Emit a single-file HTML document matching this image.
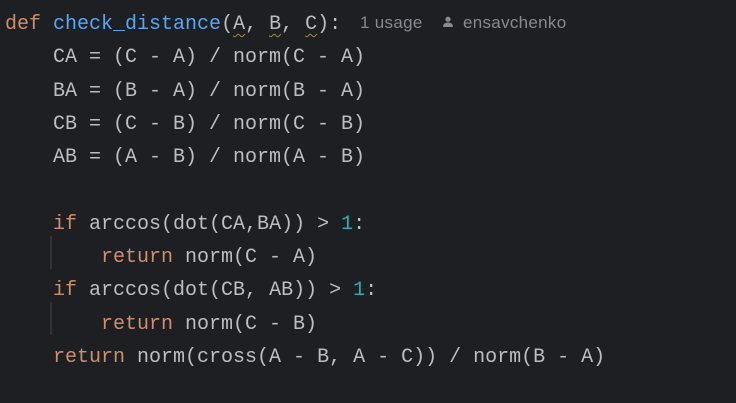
<!DOCTYPE html>
<html><head><meta charset="utf-8"><style>
html,body{margin:0;padding:0;background:#1e1f22;width:736px;height:403px;overflow:hidden}
.code{position:absolute;left:5px;top:8px;font-family:"Liberation Mono",monospace;font-size:20px;line-height:33.3px;color:#bcbec4;white-space:pre}
.k{color:#cf8e6d}.f{color:#56a8f5}.n{color:#2aacb8}
.u{text-decoration:underline wavy #a08a3c;text-decoration-thickness:1px;text-underline-offset:4px}
.hint{position:absolute;top:13px;font-family:"Liberation Sans",sans-serif;font-size:17px;color:#868a91;white-space:nowrap;letter-spacing:0.3px}
.g{position:absolute;left:50px;width:2px;background:#313338}
</style></head><body>
<div class="g" style="top:236px;height:33px"></div>
<div class="g" style="top:302px;height:33px"></div>
<div class="code"><span class="k">def</span> <span class="f">check_distance</span>(<span class="u">A</span>, <span class="u">B</span>, <span class="u">C</span>):
    CA = (C - A) / norm(C - A)
    BA = (B - A) / norm(B - A)
    CB = (C - B) / norm(C - B)
    AB = (A - B) / norm(A - B)

    <span class="k">if</span> arccos(dot(CA,BA)) &gt; <span class="n">1</span>:
        <span class="k">return</span> norm(C - A)
    <span class="k">if</span> arccos(dot(CB, AB)) &gt; <span class="n">1</span>:
        <span class="k">return</span> norm(C - B)
    <span class="k">return</span> norm(cross(A - B, A - C)) / norm(B - A)</div>
<div class="hint" style="left:360px">1 usage</div>
<svg style="position:absolute;left:443px;top:16px" width="10" height="12" viewBox="0 0 10 12"><circle cx="5" cy="3.2" r="2.6" fill="#868a91"/><path d="M0 11 Q0 6.5 5 6.5 Q10 6.5 10 11 Z" fill="#868a91"/></svg>
<div class="hint" style="left:463px">ensavchenko</div>
</body></html>
